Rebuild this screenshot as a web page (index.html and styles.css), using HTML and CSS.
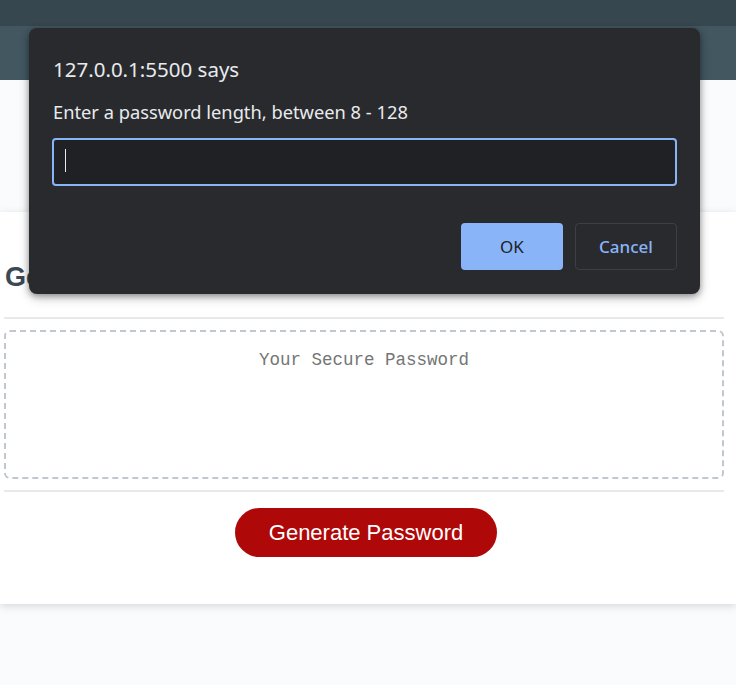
FILE: index.html
```html
<!DOCTYPE html>
<html lang="en">
<head>
<meta charset="utf-8">
<title>Password Generator</title>
<link rel="stylesheet" href="styles.css">
</head>
<body>
  <header class="site-header">
    <div class="topbar"></div>
    <div class="navbar"></div>
  </header>
  <div class="spacer"></div>
  <main class="card">
    <div class="card-header">
      <h2>Generate a Password</h2>
    </div>
    <div class="card-body">
      <textarea class="password" readonly placeholder="Your Secure Password" aria-label="Generated Password"></textarea>
    </div>
    <div class="card-footer">
      <button class="btn" type="button">Generate Password</button>
    </div>
  </main>

  <div class="dialog" role="dialog">
    <div class="dialog-title">127.0.0.1:5500 says</div>
    <div class="dialog-msg">Enter a password length, between 8 - 128</div>
    <div class="dialog-input"><span class="caret"></span></div>
    <div class="dialog-actions">
      <button class="dbtn ok" type="button">OK</button>
      <button class="dbtn cancel" type="button">Cancel</button>
    </div>
  </div>
</body>
</html>
```

FILE: styles.css
```css
* { box-sizing: border-box; }

body {
  margin: 0;
  background: #f9fbfd;
  font-family: "Liberation Sans", Arial, sans-serif;
  min-height: 685px;
}

.topbar { height: 26px; background: #37474f; }
.navbar { height: 54px; background: #435761; }

.spacer { height: 132px; }

.card {
  background: #ffffff;
  box-shadow: rgba(0, 0, 0, 0.15) 0 2px 8px 0;
  color: hsl(206, 17%, 28%);
  padding: 30px 12px 30px 4px;
}

.card-header h2 {
  margin: 20px 0 24px 1px;
  font-size: 27px;
  line-height: 31px;
  font-weight: 700;
}

.card-header::after,
.card-footer::before {
  content: "";
  display: block;
  height: 2px;
  background: #e7e9eb;
}

.card-body { padding: 11px 0 11px; }

.password {
  display: block;
  width: 100%;
  height: 149px;
  border: 2px dashed #c0c7cf;
  border-radius: 6px;
  padding: 17px 15px 0;
  font-family: "Liberation Mono", monospace;
  font-size: 17.5px;
  line-height: 22px;
  text-align: center;
  resize: none;
  overflow: hidden;
  outline: none;
  background: #fff;
}
.password::placeholder { color: #757575; }

.card-footer { text-align: center; }

.btn {
  border: none;
  background: hsl(360, 91%, 36%);
  border-radius: 25px;
  color: #fff;
  display: inline-block;
  vertical-align: top;
  font-family: "Liberation Sans", Arial, sans-serif;
  font-size: 22px;
  line-height: 22px;
  margin: 16px 16px 17px 20px;
  padding: 14px 34px 13px;
}

/* Browser prompt dialog overlay */
.dialog {
  position: absolute;
  left: 29px;
  top: 28px;
  width: 671px;
  height: 266px;
  background: #292a2d;
  border-radius: 8px;
  box-shadow: 0 2px 6px rgba(0, 0, 0, 0.35), 0 4px 12px rgba(0, 0, 0, 0.2);
  padding: 28px 23px 0 24px;
  font-family: "Noto Sans", "Open Sans", sans-serif;
  color: #e8eaed;
}

.dialog-title {
  font-size: 20.5px;
  line-height: 26px;
}

.dialog-msg {
  margin-top: 19px;
  font-size: 18.3px;
  line-height: 22px;
}

.dialog-input {
  margin-top: 15px;
  margin-left: -1px;
  height: 48px;
  border: 2px solid #8ab4f8;
  border-radius: 4px;
  background: #202124;
  padding: 9px 0 0 11px;
}

.caret {
  display: block;
  width: 1px;
  height: 23px;
  background: #e8eaed;
}

.dialog-actions {
  display: flex;
  justify-content: flex-end;
  gap: 12px;
  margin-top: 37px;
}

.dbtn {
  width: 102px;
  height: 47px;
  border-radius: 4px;
  font-family: "Noto Sans", "Open Sans", sans-serif;
  font-size: 17px;
}

.ok {
  background: #8ab4f8;
  border: none;
  color: #202124;
}

.cancel {
  background: transparent;
  border: 1px solid #3c4043;
  color: #8ab4f8;
  font-weight: 500;
}
```
